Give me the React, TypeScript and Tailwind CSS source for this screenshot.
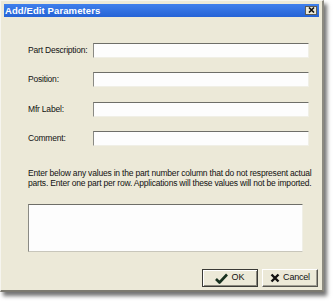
import React from "react";

const fontSans = { fontFamily: '"Liberation Sans", Arial, sans-serif' };

const Field = ({ label }: { label: string }) => (
  <div className="flex items-center h-[15px]">
    <span className="w-[65px] text-[8.5px] tracking-[-0.2px] text-[#111]">{label}</span>
    <div className="w-[216px] h-[15px] bg-[#fdfdfd] border-t border-l border-t-[#6e6e68] border-l-[#8a8a84] border-b border-r border-b-[#f0efe6] border-r-[#f0efe6]" />
  </div>
);

const CheckIcon = () => (
  <svg width="13" height="11" viewBox="0 0 13 11">
    <path d="M1 6 L4.5 9.5 L12 1.5" fill="none" stroke="#17301f" strokeWidth="2.6" strokeLinejoin="round" />
  </svg>
);

const CrossIcon = () => (
  <svg width="10" height="10" viewBox="0 0 10 10">
    <path d="M1.5 1.5 L8.5 8.5 M8.5 1.5 L1.5 8.5" stroke="#111" strokeWidth="2.4" />
  </svg>
);

export default function App() {
  return (
    <div className="w-[333px] h-[301px] bg-white" style={fontSans}>
      <div className="w-[324px] h-[292px] bg-[#ECE9D8] p-[3px] flex flex-col border-t border-l border-t-[#f6f5ef] border-l-[#f6f5ef] border-r-2 border-b-2 border-r-[#8c8a80] border-b-[#7c7a70] shadow-[3px_4px_4px_rgba(0,0,0,0.55)]">
        <div className="h-[13px] flex items-center justify-between pl-[1px] pr-[2px] bg-gradient-to-b from-[#3f7fec] to-[#2563d6]">
          <span className="text-white font-bold text-[9.5px] leading-none tracking-[0.1px]">Add/Edit Parameters</span>
          <div className="w-[12px] h-[9px] flex items-center justify-center bg-[#ECE9D8] border border-[#5c5c58]">
            <svg width="7" height="6" viewBox="0 0 7 6">
              <path d="M1 0.5 L6 5.5 M6 0.5 L1 5.5" stroke="#111" strokeWidth="1.6" />
            </svg>
          </div>
        </div>
        <div className="flex flex-col pl-[24px] pt-[26px]">
          <div className="flex flex-col gap-[14.5px]">
            <Field label="Part Description:" />
            <Field label="Position:" />
            <Field label="Mfr Label:" />
            <Field label="Comment:" />
          </div>
          <p className="mt-[22px] w-[284px] text-[8.5px] leading-[10px] tracking-[-0.2px] text-[#111]">
            Enter below any values in the part number column that do not respresent actual parts. Enter one part per row. Applications will these values will not be imported.
          </p>
          <div className="mt-[16px] w-[275px] h-[48px] bg-[#fdfdfd] border-t border-l border-t-[#6e6e68] border-l-[#8a8a84] border-b border-r border-b-[#c8c6bb] border-r-[#f0efe6]" />
          <div className="mt-[17px] flex justify-end gap-[4px] pr-[1px]">
            <button className="w-[56px] h-[18px] flex items-center justify-center gap-[3px] bg-[#ECE9D8] border border-[#3a3a36] shadow-[inset_1px_1px_0_#ffffff,inset_-1px_-1px_0_#8a887e] text-[9px] text-[#111]">
              <CheckIcon />
              <span>OK</span>
            </button>
            <button className="w-[56px] h-[18px] flex items-center justify-center gap-[3px] bg-[#ECE9D8] border border-t-[#ffffff] border-l-[#ffffff] border-b-[#55544e] border-r-[#55544e] shadow-[inset_-1px_-1px_0_#a09e94] text-[9px] tracking-[-0.2px] text-[#111]">
              <CrossIcon />
              <span>Cancel</span>
            </button>
          </div>
        </div>
      </div>
    </div>
  );
}
